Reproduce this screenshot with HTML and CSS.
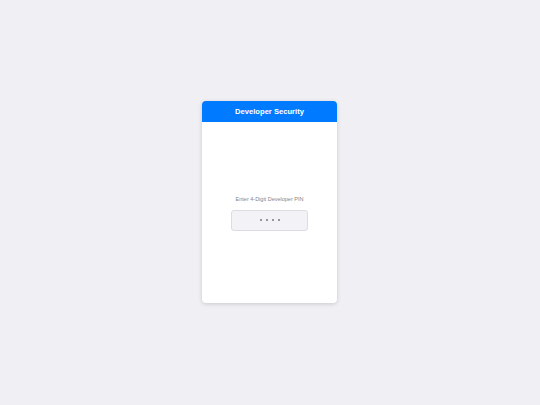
FILE: index.html
```html
<!DOCTYPE html>
<html lang="en">
<head>
<meta charset="utf-8">
<title>Developer Security</title>
<link rel="stylesheet" href="styles.css">
</head>
<body>
  <div class="stage">
    <div class="card">
      <div class="card-header">Developer Security</div>
      <div class="card-body">
        <div class="label">Enter 4-Digit Developer PIN</div>
        <div class="pin-input">
          <span class="dot"></span><span class="dot"></span><span class="dot"></span><span class="dot"></span>
        </div>
      </div>
    </div>
  </div>
</body>
</html>
```

FILE: styles.css
```css
html, body {
  margin: 0;
  padding: 0;
}
body {
  background: #efeff4;
  font-family: "Liberation Sans", Arial, sans-serif;
}
.stage {
  width: 540px;
  height: 405px;
  display: flex;
  align-items: center;
  justify-content: center;
}
.card {
  width: 135px;
  height: 202px;
  margin-left: -1px;
  margin-top: -1px;
  background: #ffffff;
  border-radius: 4px;
  overflow: hidden;
  box-shadow: 0 1px 4px rgba(0, 0, 0, 0.16);
  display: flex;
  flex-direction: column;
}
.card-header {
  height: 21px;
  background: #007aff;
  color: #ffffff;
  font-weight: bold;
  font-size: 7.6px;
  display: flex;
  align-items: center;
  justify-content: center;
}
.card-body {
  flex: 1;
  display: flex;
  flex-direction: column;
  align-items: center;
  justify-content: center;
  padding-top: 1px;
}
.label {
  font-size: 5.5px;
  line-height: 7px;
  color: #85858a;
  margin-bottom: 7px;
}
.pin-input {
  box-sizing: border-box;
  width: 77px;
  height: 21px;
  background: #f2f2f7;
  border: 1px solid #dcdce2;
  border-radius: 3px;
  display: flex;
  align-items: center;
  justify-content: center;
  gap: 4px;
}
.dot {
  width: 2px;
  height: 2px;
  border-radius: 50%;
  background: #77777d;
}
```
